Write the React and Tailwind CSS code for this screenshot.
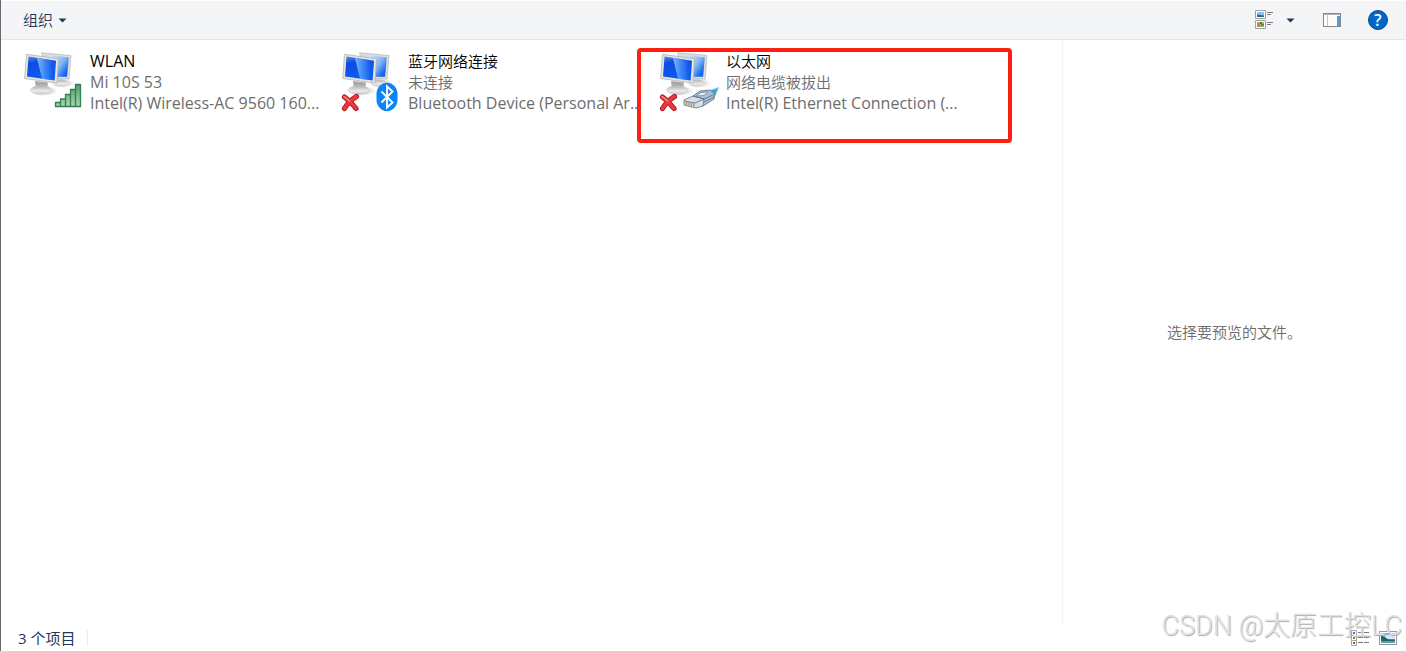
const NAVY = '#1e395b';

function Monitors() {
  return (
    <>
      <defs>
        <linearGradient id="screen" x1="0" y1="0" x2="0.3" y2="1">
          <stop offset="0" stopColor="#4c8ff2" />
          <stop offset="0.3" stopColor="#0f4be0" />
          <stop offset="1" stopColor="#0b5cf6" />
        </linearGradient>
        <linearGradient id="glare" x1="0" y1="0" x2="1" y2="0">
          <stop offset="0" stopColor="#8cc6ff" stopOpacity="0.9" />
          <stop offset="0.6" stopColor="#3f8cf8" stopOpacity="0.6" />
          <stop offset="1" stopColor="#0d49d8" stopOpacity="0.1" />
        </linearGradient>
        <linearGradient id="screenBack" x1="0" y1="0" x2="1" y2="0.6">
          <stop offset="0.3" stopColor="#c2e0fd" />
          <stop offset="0.7" stopColor="#7db8f9" />
          <stop offset="1" stopColor="#1765ec" />
        </linearGradient>
        <linearGradient id="stand" x1="0" y1="0" x2="0" y2="1">
          <stop offset="0" stopColor="#aeaeae" />
          <stop offset="0.6" stopColor="#ebebeb" />
          <stop offset="1" stopColor="#c8c8c8" />
        </linearGradient>
        <radialGradient id="shade">
          <stop offset="0" stopColor="#999" stopOpacity="0.7" />
          <stop offset="1" stopColor="#999" stopOpacity="0" />
        </radialGradient>
      </defs>
      <ellipse cx="41" cy="33" rx="11" ry="5" fill="url(#shade)" />
      <ellipse cx="38" cy="33" rx="8" ry="3.500" fill="url(#stand)" />
      <ellipse cx="22" cy="41" rx="14" ry="5" fill="url(#shade)" />
      <path d="M19.500 2.800 49 5.500 47 29 26 28Z" fill="#dededc" stroke="#b6b5b2" strokeWidth="0.7" />
      <path d="M21.500 4.800 46.800 7.200 45.100 26.800 30 27Z" fill="url(#screenBack)" />
      <path d="M13 31 26 32.500 25 39 14 39Z" fill="#a9a9a9" />
      <ellipse cx="19" cy="40" rx="10.500" ry="4.300" fill="url(#stand)" stroke="#c6c6c6" strokeWidth="0.6" />
      <path d="M4.500 4.300 36.500 8.800 35 33 2.700 28.500Z" fill="#e6e5e3" stroke="#b2b1ae" strokeWidth="0.8" />
      <path d="M6.500 6.600 34 10.700 32.600 30.500 5 26.500Z" fill="url(#screen)" />
      <path d="M15 8 34 10.700 32.600 30.500 20 28.700Z" fill="url(#glare)" />
    </>
  );
}

function RedCross() {
  return (
    <g strokeLinecap="round" fill="none">
      <path d="M4.500 47Q10 51 16 58.500M16.500 46.500Q9 51 4.500 58.500" stroke="#b5161b" strokeWidth="5.200" />
      <path d="M4.500 47Q10 51 16 58.500M16.500 46.500Q9 51 4.500 58.500" stroke="#e63a3f" strokeWidth="3.400" />
      <path d="M4 46.500Q7 48.500 9.500 51" stroke="#f59a98" strokeWidth="1.200" />
    </g>
  );
}

function SignalBars() {
  return (
    <>
      <defs>
        <linearGradient id="bars" x1="0" y1="0" x2="0" y2="1">
          <stop offset="0" stopColor="#4f9c69" />
          <stop offset="1" stopColor="#a5d8b1" />
        </linearGradient>
      </defs>
      <path
        d="M33.500 52.500h5v4h-5zM38.500 49h5v7.500h-5zM43.500 44.500h5v12h-5zM48.500 39.500h5v17h-5zM53.500 34.500h5v22h-5z"
        fill="url(#bars)"
        stroke="#337d50"
        strokeWidth="1.300"
        strokeLinejoin="round"
      />
    </>
  );
}

function BluetoothBadge() {
  return (
    <>
      <rect x="36.500" y="32.700" width="21" height="28.500" rx="10.500" ry="11.500" fill="#0a84f7" />
      <path d="M41.500 41.500 52.500 52.500 47 57.500V36.500L52.500 41.500 41.500 52.500" fill="none" stroke="#fff" strokeWidth="1.900" />
    </>
  );
}

function CablePlug() {
  return (
    <g strokeLinejoin="round">
      <path d="M48 42 60.500 37.500 57.500 45 52 46.500Z" fill="#35a9dc" stroke="#8ccbe8" strokeWidth="0.8" />
      <path d="M35 46 42 41 52 40 57 44 56 49 45 56 36 55Z" fill="#a9bfd6" stroke="#62758e" strokeWidth="0.9" />
      <path d="M38 46 43 42.500 50 42 46 45.500Z" fill="#e9f1f8" stroke="#74879e" strokeWidth="0.8" />
      <path d="M26 50 35 46 46 49 45 56 38 58 26 55Z" fill="#d6dee6" stroke="#6c7d92" strokeWidth="0.9" />
      <path d="M46 49 56 44.500M46 52 56 47M35 46 46 49M26 51 37 53 46 49" fill="none" stroke="#62758e" strokeWidth="0.9" />
      <path d="M28.500 51.500v3.500M31 52v3.500M33.500 52.500v3.500M36 53v3.500" stroke="#9a9a5c" strokeWidth="1.300" />
    </g>
  );
}

function AdapterIcon({ kind }) {
  return (
    <svg viewBox="0 0 62 64" className="h-16 w-[62px] shrink-0" aria-hidden="true">
      <Monitors />
      {kind !== 'wlan' && <RedCross />}
      {kind === 'wlan' && <SignalBars />}
      {kind === 'bluetooth' && <BluetoothBadge />}
      {kind === 'ethernet' && <CablePlug />}
    </svg>
  );
}

function ViewIcon() {
  return (
    <svg viewBox="0 0 19 20" className="h-5 w-[19px]" aria-hidden="true">
      <path d="M0.500 0.500h10v8H0.500zM0.500 10.500h10v8H0.500z" fill="#fff" stroke="#a0a2a5" />
      <path d="M2 2h7v5H2z" fill="#8cc1ef" />
      <path d="M2 4.500l3 0.500 4 0.500V7H2z" fill="#2f6f68" />
      <path d="M2 12h7v5H2z" fill="#8fc06a" />
      <path d="M2 13h3v4H2z" fill="#d8803a" />
      <path d="M5 12h2v2H5z" fill="#c9423a" />
      <path d="M6 14h3v2H6z" fill="#4c9a4f" />
      <path d="M12 2.500h6M12 4.500h4M12 12.500h6M12 14.500h4" stroke="#7b7d80" />
    </svg>
  );
}

function PaneIcon() {
  return (
    <svg viewBox="0 0 18 14" className="h-3.5 w-[18px]" aria-hidden="true">
      <rect x="0.500" y="0.500" width="17" height="13" fill="#fcfcfc" stroke="#85888d" />
      <path d="M1 1.500h16" stroke="#b3b5b8" />
      <path d="M4.500 2v11" stroke="#c3c5c8" />
      <path d="M14 3h3v10h-3z" fill="#4a9fe3" />
    </svg>
  );
}

function Caret() {
  return (
    <svg viewBox="0 0 9 5" className="h-[5px] w-[9px]" aria-hidden="true">
      <path d="M0.500 0.500h8L4.500 4.500z" fill={NAVY} />
    </svg>
  );
}

const adapters = [
  { kind: 'wlan', name: 'WLAN', status: 'Mi 10S 53', device: 'Intel(R) Wireless-AC 9560 160...' },
  { kind: 'bluetooth', name: '蓝牙网络连接', status: '未连接', device: 'Bluetooth Device (Personal Ar...' },
  { kind: 'ethernet', name: '以太网', status: '网络电缆被拔出', device: 'Intel(R) Ethernet Connection (...' },
];

function Line({ children, className = '' }) {
  // Latin lines are set one step larger than the Chinese ones
  const latin = /^[\x20-\x7e]+$/.test(children);
  return <p className={`${latin ? 'text-[16px]' : 'text-[15px] font-[350]'} leading-[21px] ${className}`}>{children}</p>;
}

function Adapter({ kind, name, status, device }) {
  return (
    <li className="relative flex w-[318px] gap-1.5">
      {kind === 'ethernet' && (
        <div className="pointer-events-none absolute -top-0.5 -left-[21px] h-[95px] w-[375px] rounded-sm border-4 border-[#ff1f12]" />
      )}
      <AdapterIcon kind={kind} />
      <div className="relative z-10 whitespace-nowrap pt-px text-[#6d6d6d]">
        <Line className="text-black">{name}</Line>
        <Line>{status}</Line>
        <Line>{device}</Line>
      </div>
    </li>
  );
}

export default function App() {
  return (
    <div className="relative flex min-h-screen flex-col border-l border-[#69696d] bg-white font-['Open_Sans','Noto_Sans_CJK_SC',sans-serif] text-[15px]">
      <header className="flex h-10 items-center justify-between border-t border-b border-t-white border-b-[#e4e6e8] bg-[#f4f5f7] pr-[18px] pl-[22px]">
        <button type="button" className="flex items-center gap-[5px] font-[350] text-[#1e395b]">
          组织
          <Caret />
        </button>
        <div className="flex items-center">
          <button type="button" aria-label="更改视图" className="flex items-center gap-3">
            <ViewIcon />
            <Caret />
          </button>
          <button type="button" aria-label="显示预览窗格" className="ml-7">
            <PaneIcon />
          </button>
          <button type="button" aria-label="帮助" className="ml-[27px] flex size-5 items-center justify-center rounded-full border border-[#0b4a8c] bg-[#0067c8] text-[16px] font-semibold text-white">
            ?
          </button>
        </div>
      </header>

      <div className="flex flex-1">
        <main className="flex-1 pt-2.5 pl-[21px]">
          <ul className="flex flex-wrap">
            {adapters.map((a) => (
              <Adapter key={a.kind} {...a} />
            ))}
          </ul>
        </main>
        <aside className="flex w-[344px] items-center justify-center border-l border-[#f2f2f2] font-[350] text-[#6d6d6d]">
          选择要预览的文件。
        </aside>
      </div>

      <footer className="flex h-[27px] items-center justify-between pr-[9px] pl-[17px] text-[#1e395b]">
        <span className="border-r border-[#ececec] pr-3 leading-4">3 个项目</span>
        <div className="flex items-center gap-2.5">
          <button type="button" aria-label="详细信息">
            <svg viewBox="0 0 18 16" className="h-4 w-[18px]" aria-hidden="true">
              <path d="M0.500 0.500h5v5h-5zM0.500 5.500h5v5h-5zM0.500 10.500h5v5h-5z" fill="#fff" stroke="#a5a5a5" />
              <path d="M2 2h2v2H2z" fill="#2f7fd0" />
              <path d="M2 7h2v2H2z" fill="#8a7a2c" />
              <path d="M2 12h2v2H2z" fill="#d0402f" />
              <path d="M7 2.500h5M13 2.500h5M7 7.500h5M13 7.500h5M7 12.500h5M13 12.500h5" stroke="#777" />
            </svg>
          </button>
          <button type="button" aria-label="大图标">
            <svg viewBox="0 0 18 14" className="h-3.5 w-[18px]" aria-hidden="true">
              <rect x="0.500" y="0.500" width="17" height="13" fill="#fff" stroke="#9a9a9a" />
              <path d="M2 2h14v10H2z" fill="#6aaef0" />
              <path d="M5 4.500q4-1.500 11 0V8H8z" fill="#d3e8fa" />
              <path d="M2 5q3 0 5 2t9 1.500V10H2z" fill="#2c6358" />
              <path d="M2 10h14v2H2z" fill="#5c9cc4" />
            </svg>
          </button>
        </div>
      </footer>

      <p className="pointer-events-none absolute right-1 bottom-[7px] font-[Roboto,'Noto_Sans_CJK_SC',sans-serif] text-[27px] leading-9 font-light whitespace-nowrap text-[#e2e2e2] [text-shadow:1px_1px_1px_#a8a8a8]">
        CSDN @太原工控LC
      </p>
    </div>
  );
}
